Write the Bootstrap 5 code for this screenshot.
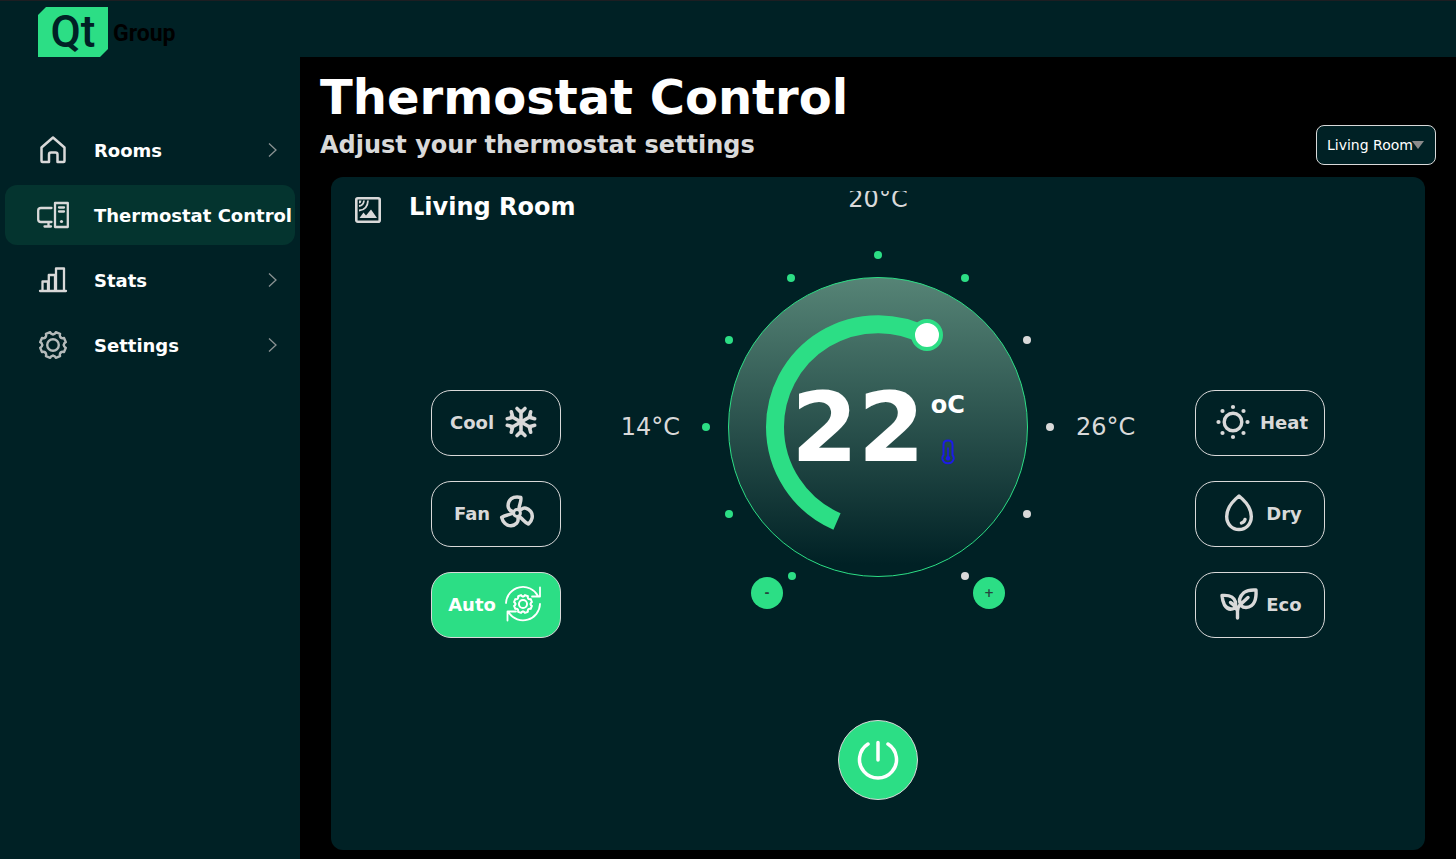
<!DOCTYPE html>
<html lang="en">
<head>
<meta charset="utf-8">
<meta name="viewport" content="width=device-width, initial-scale=1">
<title>Thermostat Control</title>
<link href="https://cdn.jsdelivr.net/npm/bootstrap@5.3.0/dist/css/bootstrap.min.css" rel="stylesheet">
<style>
:root { --panel: #002125; --accent: #2cde85; --soft: #d9d9d9; --active: #04342f; }
body { font-family: "DejaVu Sans", sans-serif; background: #000; color: #fff; }
svg { display: block; flex: none; }
.topbar { background: var(--panel); border-top: 1px solid #1d1e22; height: 57px; padding: 6px 0 0 38px; gap: 5px; }
.logo-tile { width: 70px; height: 50px; background: var(--accent); color: var(--panel);
  clip-path: polygon(8px 0, 100% 0, 100% 42px, 62px 100%, 0 100%, 0 8px);
  font: 500 44px/50px Roboto, sans-serif; }
.logo-word { color: #000; font: 700 23px/54px Roboto, sans-serif; }
.side { width: 300px; background: var(--panel); padding: 63px 5px 0; }
.side-list { gap: 5px; }
.side-link { height: 60px; border-radius: 12px; padding-left: 32px; gap: 25px; color: #fff; font-size: 18px; font-weight: 700; text-decoration: none; white-space: nowrap; }
.side-link.active { background: var(--active); }
.side-link .chev { margin-left: auto; margin-right: 17px; }
.stage { padding: 12px 20px 9px; }
.page-title { font-size: 48px; line-height: 56px; font-weight: 700; }
.page-sub { font-size: 24px; line-height: 40px; font-weight: 700; color: var(--soft); }
.room-select { width: 120px; height: 40px; padding: 0 10px; appearance: none; border: 1px solid var(--soft); border-radius: 8px; background: var(--panel); color: #fff; font-size: 14px; }
.room-arrow { right: 12px; top: 16px; pointer-events: none; }
.panel { background: var(--panel); border-radius: 12px; margin: 12px 11px 0; padding: 14px 0 50px; }
.panel-grid { display: grid; grid-template-columns: 1fr auto 1fr; grid-template-rows: 40px auto; }
.room-head { grid-area: 1 / 1; padding-left: 22px; gap: 26px; }
.room-name { font-size: 24px; line-height: 32px; font-weight: 700; }
.dial { grid-area: 1 / 2 / 3 / 3; }
.modes-left { grid-area: 2 / 1; margin-left: 100px; }
.modes-right { grid-area: 2 / 3; margin-right: 100px; }
.modes { padding-top: 159px; gap: 25px; }
.mode { width: 130px; height: 66px; gap: 6px; border: 1px solid var(--soft); border-radius: 20px; background: transparent; color: var(--soft); font-size: 18px; font-weight: 700; padding: 0 0 2px; }
.mode.on { background: var(--accent); color: #fff; }
.scale { font-size: 24px; line-height: 28px; color: var(--soft); }
.scale-top { height: 22px; margin-bottom: 38px; overflow: hidden; }
.ring { gap: 22px; }
.degrees { font-size: 96px; line-height: 96px; font-weight: 700; }
.unit { font-size: 24px; line-height: 28px; font-weight: 700; }
.reading { gap: 6px; padding-top: 2px; }
.reading-side { gap: 20px; }
.steps { gap: 190px; margin-top: -26px; }
.step { width: 32px; height: 32px; border: 0; border-radius: 50%; background: var(--accent); color: #26463f; font-size: 12px; font-weight: 700; padding: 0; position: relative; }
.power { width: 80px; height: 80px; border: 1px solid var(--soft); border-radius: 50%; background: var(--accent); color: #fff; padding: 0; }
</style>
</head>
<body class="d-flex flex-column min-vh-100">
<svg width="0" height="0" class="position-absolute" aria-hidden="true">
  <defs>
    <path id="tooth" d="M0-10.8Q2-10.8 2.8-12.8L7.07-11.03Q6.22-9.05 7.64-7.64"/>
    <g id="gear">
      <use href="#tooth"/><use href="#tooth" transform="rotate(45)"/><use href="#tooth" transform="rotate(90)"/><use href="#tooth" transform="rotate(135)"/>
      <use href="#tooth" transform="rotate(180)"/><use href="#tooth" transform="rotate(225)"/><use href="#tooth" transform="rotate(270)"/><use href="#tooth" transform="rotate(315)"/>
      <circle r="5.8"/>
    </g>
    <path id="flake" d="M0 0V-11M-4-13.5L0-9.5L4-13.5"/>
    <path id="blade" d="M-5.5-2C-8.500-3-10-7-8-11.500C-6-15.500-1-17 3.800-15.500C4.500-11.500 2.500-9 2-4.500"/>
  </defs>
</svg>

<header class="topbar d-flex align-items-start">
  <div class="logo-tile text-center">Qt</div>
  <div class="logo-word">Group</div>
</header>

<div class="d-flex flex-grow-1">
  <nav class="side flex-shrink-0" aria-label="Main">
    <div class="side-list d-flex flex-column">
      <a href="#" class="side-link d-flex align-items-center">
        <svg width="32" height="32" viewBox="0 0 32 32" fill="none" stroke="#d9d9d9" stroke-width="2.500" stroke-linejoin="round"><path d="M4.500 13.500L16 3.500L27.500 13.500V27Q27.500 28 26.500 28H20.500V20.500Q20.500 18.500 18.500 18.500H14Q12 18.500 12 20.500V28H5.500Q4.500 28 4.500 27Z"/></svg>
        <span>Rooms</span>
        <svg class="chev" width="10" height="16" viewBox="0 0 10 16" fill="none" stroke="#8a9293" stroke-width="1.300"><path d="M1 1.500L8 8L1 14.500"/></svg>
      </a>
      <a href="#" class="side-link active d-flex align-items-center" aria-current="page">
        <svg width="32" height="32" viewBox="0 0 32 32" fill="none" stroke="#d9d9d9" stroke-width="2.300" stroke-linecap="round" stroke-linejoin="round"><path d="M14.500 9H4Q1.200 9 1.200 11.500V20.500Q1.200 23 4 23H14.500M11.500 23V26.500M7.500 27.500H14M18 4H30.800V28H18ZM22 8.500H27M22 12.500H27"/><circle cx="24.500" cy="22.500" r="1.600" fill="#d9d9d9" stroke="none"/></svg>
        <span>Thermostat Control</span>
      </a>
      <a href="#" class="side-link d-flex align-items-center">
        <svg width="32" height="32" viewBox="0 0 32 32" fill="none" stroke="#d9d9d9" stroke-width="2.300" stroke-linecap="round" stroke-linejoin="round"><path d="M3 27H29M5.500 26.500V17.500H11V26.500M11.800 26.500V11H18V26.500M19 26.500V4.500H27V26.500"/></svg>
        <span>Stats</span>
        <svg class="chev" width="10" height="16" viewBox="0 0 10 16" fill="none" stroke="#8a9293" stroke-width="1.300"><path d="M1 1.500L8 8L1 14.500"/></svg>
      </a>
      <a href="#" class="side-link d-flex align-items-center">
        <svg width="32" height="32" viewBox="-16 -16 32 32" fill="none" stroke="#b4baba" stroke-width="2.400" stroke-linecap="round" stroke-linejoin="round"><use href="#gear"/></svg>
        <span>Settings</span>
        <svg class="chev" width="10" height="16" viewBox="0 0 10 16" fill="none" stroke="#8a9293" stroke-width="1.300"><path d="M1 1.500L8 8L1 14.500"/></svg>
      </a>
    </div>
  </nav>

  <main class="stage flex-grow-1 d-flex flex-column">
    <h1 class="page-title m-0">Thermostat Control</h1>
    <div class="d-flex justify-content-between">
      <p class="page-sub m-0">Adjust your thermostat settings</p>
      <div class="position-relative">
        <select class="room-select" aria-label="Room"><option>Living Room</option><option>Kitchen</option><option>Bedroom</option></select>
        <svg class="room-arrow position-absolute" width="12" height="8" viewBox="0 0 12 8"><path d="M0 0H12L6 8Z" fill="#8b8b8b"/></svg>
      </div>
    </div>

    <section class="panel flex-grow-1 d-flex flex-column">
      <div class="panel-grid">
        <div class="room-head d-flex align-items-start">
          <svg width="30" height="36" viewBox="0 0 30 36" fill="none" stroke="#d9d9d9" stroke-width="2.600" stroke-linejoin="round"><rect x="3.300" y="7.300" width="23.400" height="23.400" rx="1.500"/><path d="M6 15Q10.500 14.500 11 9.500M6 19.500Q14.500 19 15 9.500" stroke-width="1.800"/><path d="M6 9.500H8.500Q8.500 12 6 12.500ZM6.500 27L10.500 21.500L13 24.500L18 18.500L24 27Z" fill="#d9d9d9" stroke="none"/></svg>
          <h2 class="room-name m-0">Living Room</h2>
        </div>

        <div class="modes modes-left d-flex flex-column">
          <button type="button" class="mode d-flex align-items-center justify-content-center">Cool
            <svg width="42" height="42" viewBox="-21 -21 42 42" fill="none" stroke="currentColor" stroke-width="3.600" stroke-linecap="round" stroke-linejoin="round"><use href="#flake"/><use href="#flake" transform="rotate(60)"/><use href="#flake" transform="rotate(120)"/><use href="#flake" transform="rotate(180)"/><use href="#flake" transform="rotate(240)"/><use href="#flake" transform="rotate(300)"/></svg>
          </button>
          <button type="button" class="mode d-flex align-items-center justify-content-center">Fan
            <svg width="42" height="42" viewBox="-21 -21 42 42" fill="none" stroke="currentColor" stroke-width="3.500" stroke-linecap="round" stroke-linejoin="round"><circle r="3.400" stroke-width="3"/><use href="#blade"/><use href="#blade" transform="rotate(120)"/><use href="#blade" transform="rotate(240)"/></svg>
          </button>
          <button type="button" class="mode on d-flex align-items-center justify-content-center" aria-pressed="true">Auto
            <svg width="42" height="42" viewBox="-21 -21 42 42" fill="none" stroke="currentColor" stroke-width="1.800" stroke-linecap="round" stroke-linejoin="round"><path d="M-17-1A17 17 0 0 1 15-8M17-16.500V-7.500H9M17 0A17 17 0 0 1-14 9M-15.500 16.500V7.500H-7"/><g transform="scale(.7)" stroke-width="2.800"><use href="#gear"/></g></svg>
          </button>
        </div>

        <div class="dial d-flex flex-column align-items-center">
          <div class="scale scale-top d-flex align-items-end">20°C</div>
          <div class="ring d-flex align-items-center">
            <span class="scale">14°C</span>
            <div class="position-relative">
              <svg width="352" height="352" viewBox="-176 -176 352 352" role="img" aria-label="Target temperature dial">
                <defs><linearGradient id="glass" x1="0" y1="0" x2="0" y2="1"><stop offset="0" stop-color="#568476"/><stop offset=".96" stop-color="#002125"/></linearGradient></defs>
                <circle r="149.500" fill="url(#glass)" stroke="#2cde85"/>
                <path d="M-41 94.500A103 103 0 0 1-103 0A103 103 0 0 1 48-91" fill="none" stroke="#2cde85" stroke-width="18"/>
                <circle cx="49" cy="-92" r="14" fill="#fff" stroke="#2cde85" stroke-width="4"/>
                <g fill="#2cde85"><circle cx="-86" cy="149" r="4"/><circle cx="-149" cy="87" r="4"/><circle cx="-172" cy="0" r="4"/><circle cx="-149" cy="-87" r="4"/><circle cx="-87" cy="-149" r="4"/><circle cx="0" cy="-172" r="4"/><circle cx="87" cy="-149" r="4"/></g>
                <g fill="#d9d9d9"><circle cx="149" cy="-87" r="4"/><circle cx="172" cy="0" r="4"/><circle cx="149" cy="87" r="4"/><circle cx="87" cy="149" r="4"/></g>
              </svg>
              <div class="reading position-absolute top-0 start-0 w-100 h-100 d-flex align-items-center justify-content-center">
                <span class="degrees">22</span>
                <div class="reading-side d-flex flex-column align-items-center">
                  <span class="unit">oC</span>
                  <svg width="14" height="26" viewBox="0 0 14 26" fill="none" stroke="#1b1be6" stroke-linecap="round"><path d="M2.500 16V5.500Q2.500 1.500 7 1.500Q11.500 1.500 11.500 5.500V16Q13 17.500 12.600 20Q11.500 24.300 7 24.300Q2.500 24.300 1.400 20Q1 17.500 2.500 16Z" stroke-width="2"/><path d="M7 9V19" stroke-width="1.600"/><circle cx="7" cy="19.300" r="2.200" fill="#1b1be6" stroke="none"/></svg>
                </div>
              </div>
            </div>
            <span class="scale">26°C</span>
          </div>
          <div class="steps d-flex">
            <button type="button" class="step" aria-label="Lower temperature">-</button>
            <button type="button" class="step" aria-label="Raise temperature">+</button>
          </div>
        </div>

        <div class="modes modes-right d-flex flex-column align-items-end">
          <button type="button" class="mode d-flex align-items-center justify-content-center">
            <svg width="42" height="42" viewBox="-21 -21 42 42" fill="none" stroke="currentColor" stroke-width="3.400"><circle r="8.800"/><g fill="currentColor" stroke="none"><circle cy="-15" r="2.100"/><circle cy="15" r="2.100"/><circle cx="-14.500" r="2.100"/><circle cx="14.500" r="2.100"/><circle cx="-10.500" cy="-11" r="2.100"/><circle cx="10.500" cy="-11" r="2.100"/><circle cx="-10.500" cy="11" r="2.100"/><circle cx="10.500" cy="11" r="2.100"/></g></svg>
            Heat</button>
          <button type="button" class="mode d-flex align-items-center justify-content-center">
            <svg width="42" height="42" viewBox="-21 -21 42 42" fill="none" stroke="currentColor" stroke-width="3.400" stroke-linecap="round" stroke-linejoin="round"><path d="M0-17C5-13 12.300-5 12.300 3.500C12.300 11 7 16.500 0 16.500S-12.300 11-12.300 3.500C-12.300-5-5-13 0-17ZM6 6.500Q5.500 9 2.500 10"/></svg>
            Dry</button>
          <button type="button" class="mode d-flex align-items-center justify-content-center">
            <svg width="42" height="42" viewBox="-21 -21 42 42" fill="none" stroke="currentColor" stroke-width="3.400" stroke-linecap="round" stroke-linejoin="round"><path d="M-1.500 14V4M-1.500 7Q-1.500 3 2 0L9-6.500M2 1.500C-1-3.500 1-8 5-11.500Q9-14.500 17-14C17.500-6 16 3 7 3.500Q4 3.500 2 1.500M-1.500 7Q-3 2-8.500-1.500M-4 4C-8 6-12 5-14.500 1Q-16.500-3-17-8.500C-11-9-5-7.500-3.500-2Q-3 1-4 4"/></svg>
            Eco</button>
        </div>
      </div>

      <button type="button" class="power mt-auto mx-auto d-flex align-items-center justify-content-center" aria-label="Power">
        <svg width="42" height="42" viewBox="-21 -21 42 42" fill="none" stroke="currentColor" stroke-width="3.500" stroke-linecap="round"><path d="M0-17.500V0M-10-16A18.500 18.500 0 1 0 10-16"/></svg>
      </button>
    </section>
  </main>
</div>
<script src="https://cdn.jsdelivr.net/npm/bootstrap@5.3.0/dist/js/bootstrap.bundle.min.js"></script>
</body>
</html>
